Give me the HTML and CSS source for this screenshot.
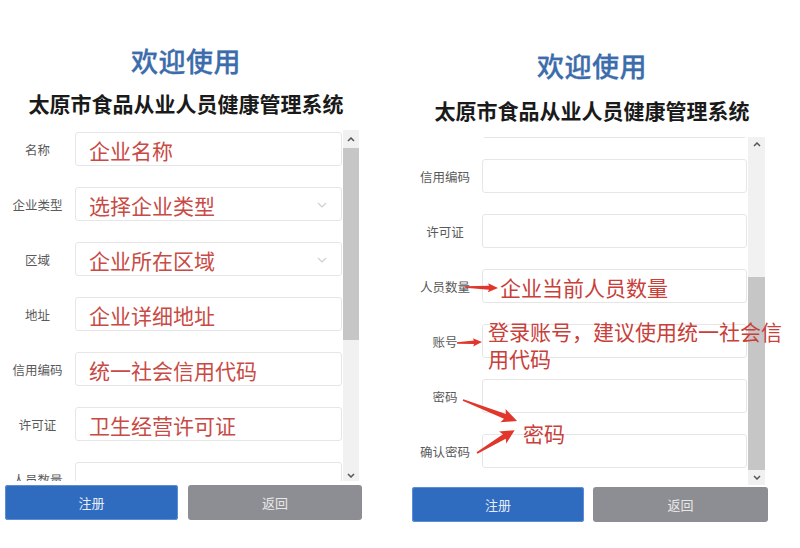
FILE: index.html
```html
<!DOCTYPE html>
<html lang="zh-CN">
<head>
<meta charset="utf-8">
<title>太原市食品从业人员健康管理系统</title>
<link rel="stylesheet" href="styles.css">
</head>
<body>
<main class="page">
  <section class="panel panel-a">
    <h1 class="welcome">欢迎使用</h1>
    <h2 class="system">太原市食品从业人员健康管理系统</h2>
    <div class="form-view">
      <div class="rows">
        <div class="row"><span class="label">名称</span><div class="field"><span class="hint">企业名称</span></div></div>
        <div class="row"><span class="label">企业类型</span><div class="field"><span class="hint">选择企业类型</span><svg class="chev" viewBox="0 0 10 6" width="10" height="6"><path d="M1 1 L5 5 L9 1" fill="none" stroke="#cfcfcf" stroke-width="1.2"/></svg></div></div>
        <div class="row"><span class="label">区域</span><div class="field"><span class="hint">企业所在区域</span><svg class="chev" viewBox="0 0 10 6" width="10" height="6"><path d="M1 1 L5 5 L9 1" fill="none" stroke="#cfcfcf" stroke-width="1.2"/></svg></div></div>
        <div class="row"><span class="label">地址</span><div class="field"><span class="hint">企业详细地址</span></div></div>
        <div class="row"><span class="label">信用编码</span><div class="field"><span class="hint">统一社会信用代码</span></div></div>
        <div class="row"><span class="label">许可证</span><div class="field"><span class="hint">卫生经营许可证</span></div></div>
        <div class="row"><span class="label">人员数量</span><div class="field"></div></div>
      </div>
      <div class="scrollbar">
        <span class="sb-btn sb-up"><svg viewBox="0 0 8 5" width="8" height="5"><path d="M1 4 L4 1 L7 4" fill="none" stroke="#555" stroke-width="1.5"/></svg></span>
        <span class="thumb"></span>
        <span class="sb-rest"></span>
        <span class="sb-btn sb-down"><svg viewBox="0 0 8 5" width="8" height="5"><path d="M1 1 L4 4 L7 1" fill="none" stroke="#555" stroke-width="1.5"/></svg></span>
      </div>
    </div>
    <div class="actions">
      <button class="btn btn-primary">注册</button>
      <button class="btn btn-secondary">返回</button>
    </div>
  </section>

  <section class="panel panel-b">
    <h1 class="welcome">欢迎使用</h1>
    <h2 class="system">太原市食品从业人员健康管理系统</h2>
    <div class="form-view">
      <div class="rows">
        <div class="row"><span class="label"></span><div class="field"></div></div>
        <div class="row"><span class="label">信用编码</span><div class="field"></div></div>
        <div class="row"><span class="label">许可证</span><div class="field"></div></div>
        <div class="row"><span class="label">人员数量</span><div class="field"><span class="hint hint-note">企业当前人员数量</span></div></div>
        <div class="row"><span class="label">账号</span><div class="field"></div></div>
        <div class="row"><span class="label">密码</span><div class="field"></div></div>
        <div class="row"><span class="label">确认密码</span><div class="field"></div></div>
      </div>
      <div class="scrollbar">
        <span class="sb-btn sb-up"><svg viewBox="0 0 8 5" width="8" height="5"><path d="M1 4 L4 1 L7 4" fill="none" stroke="#555" stroke-width="1.5"/></svg></span>
        <span class="sb-gap"></span>
        <span class="thumb"></span>
        <span class="sb-btn sb-down"><svg viewBox="0 0 8 5" width="8" height="5"><path d="M1 1 L4 4 L7 1" fill="none" stroke="#555" stroke-width="1.5"/></svg></span>
      </div>
    </div>
    <div class="actions">
      <button class="btn btn-primary">注册</button>
      <button class="btn btn-secondary">返回</button>
    </div>

    <p class="note note-account">登录账号，建议使用统一社会信用代码</p>
    <p class="note note-password">密码</p>
    <svg class="arrows" viewBox="0 0 384 548" width="384" height="548">
      <g fill="#e0362b">
        <g transform="translate(65 287) rotate(1.7)"><polygon points="0,-0.7 24,-2 23,-4.5 33,0 23,4.5 24,2 0,0.7"/></g>
        <g transform="translate(57 343) rotate(-2.3)"><polygon points="0,-0.7 17,-1.8 16,-4.2 25,0 16,4.2 17,1.8 0,0.7"/></g>
        <g transform="translate(63 400) rotate(21.3)"><polygon points="0,-0.8 45,-2.6 43,-7 58,0 43,7 45,2.6 0,0.8"/></g>
        <g transform="translate(77 453) rotate(-31.2)"><polygon points="0,-0.8 32,-2.6 30,-7 44,0 30,7 32,2.6 0,0.8"/></g>
      </g>
    </svg>
  </section>
</main>
</body>
</html>
```
FILE: styles.css
```css
* { box-sizing: border-box; }

html, body {
  margin: 0;
  padding: 0;
  background: #ffffff;
}

body {
  font-family: "Noto Sans CJK SC", "Noto Sans", sans-serif;
  color: #333;
}

.page {
  display: flex;
  gap: 28px;
  width: 800px;
  height: 548px;
  overflow: hidden;
}

.panel {
  position: relative;
  display: flex;
  flex-direction: column;
}

.panel-a { width: 372px; padding-top: 45px; }
.panel-b { width: 384px; padding-top: 50px; }

.welcome {
  margin: 0;
  text-align: center;
  font-size: 27px;
  line-height: 32px;
  font-weight: 500;
  color: #3b6cab;
  letter-spacing: 0.5px;
  -webkit-text-stroke: 0.3px #3b6cab;
}

.panel-a .welcome { margin-bottom: 13px; }
.panel-b .welcome { margin-bottom: 15px; }

.system {
  margin: 0 0 14px;
  text-align: center;
  font-size: 21px;
  line-height: 26px;
  font-weight: 700;
  color: #1a1a1a;
}

.form-view {
  display: flex;
  gap: 1px;
  overflow: hidden;
}

.panel-a .form-view { width: 359px; height: 351px; }
.panel-b .form-view { width: 365px; height: 348px; }

.rows {
  display: flex;
  flex-direction: column;
  gap: 21px;
}

.panel-a .rows { width: 342px; margin-top: 2px; }
.panel-b .rows { width: 347px; margin-top: -33px; }

.row {
  display: flex;
  align-items: center;
  height: 34px;
  flex: none;
}

.label {
  flex: none;
  text-align: center;
  font-size: 12.5px;
  color: #5a5a5a;
  white-space: nowrap;
}

.panel-a .label { width: 75px; }
.panel-b .label { width: 82px; padding-left: 8px; }

.field {
  flex: 1;
  height: 34px;
  display: flex;
  align-items: center;
  justify-content: space-between;
  padding: 2px 14px 0 13px;
  border: 1px solid #e6e6e6;
  border-radius: 3px;
  background: #fff;
}

.hint {
  font-size: 21px;
  line-height: 28px;
  color: #c94a45;
  white-space: nowrap;
}

.hint-note { padding-left: 4px; color: #c8403a; }

.chev { flex: none; }

.scrollbar {
  display: flex;
  flex-direction: column;
  background: #f1f1f1;
  flex: none;
}

.panel-a .scrollbar { width: 16px; }
.panel-b .scrollbar { width: 17px; }

.sb-btn {
  display: flex;
  align-items: center;
  justify-content: center;
  flex: none;
}

.panel-a .sb-up { height: 18px; }
.panel-a .sb-down { height: 12px; }
.panel-b .sb-up { height: 14px; }
.panel-b .sb-down { height: 15px; }

.thumb {
  display: block;
  flex: none;
  background: #c6c6c6;
}

.panel-a .thumb { height: 192px; }
.panel-b .thumb { height: 193px; }

.sb-rest { flex: 1; }
.sb-gap { flex: 1; }

.actions {
  display: flex;
}

.panel-a .actions { margin-top: 4px; padding-left: 5px; gap: 10px; }
.panel-b .actions { margin-top: 2px; padding-left: 12px; gap: 9px; }

.btn {
  height: 35px;
  border: none;
  border-radius: 3px;
  font-family: "Noto Sans CJK SC", sans-serif;
  font-size: 13px;
  padding: 0;
}

.panel-a .btn-primary { width: 173px; }
.panel-a .btn-secondary { width: 174px; }
.panel-b .btn-primary { width: 172px; }
.panel-b .btn-secondary { width: 175px; }

.btn-primary {
  background: #2f6bbf;
  color: #e6eef9;
  box-shadow: 0 0 0 1px #5a8fd6 inset;
}

.btn-secondary {
  background: #8d8e93;
  color: #e8e8e8;
}

.note {
  position: absolute;
  margin: 0;
  font-size: 21px;
  line-height: 27px;
  color: #c8403a;
}

.note-account { left: 88px; top: 318px; width: 296px; }
.note-password { left: 123px; top: 420px; }

.arrows {
  position: absolute;
  left: 0;
  top: 0;
  pointer-events: none;
}
```
